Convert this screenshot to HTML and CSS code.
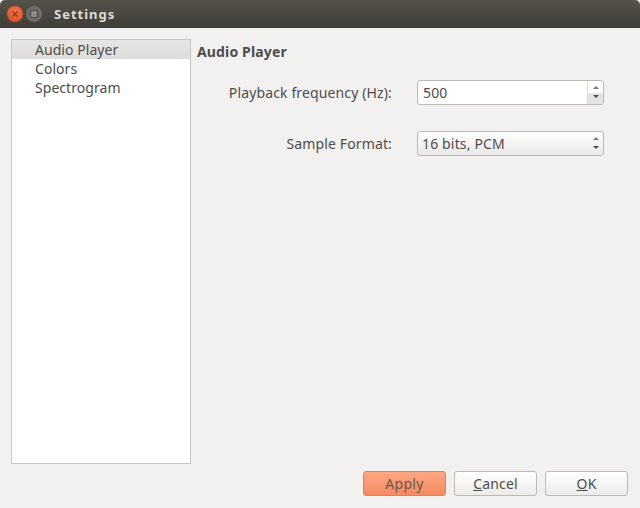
FILE: index.html
```html
<!DOCTYPE html>
<html lang="en">
<head>
    <meta charset="utf-8" />
    <title>Settings</title>
    <link rel="stylesheet" href="styles.css">
</head>
<body>
    <div class="window">
        <div class="titlebar">
            <span class="win-btn close">
                <svg width="8" height="8" viewBox="0 0 8 8"><path d="M1.5 1.5l5 5M6.5 1.5l-5 5" stroke="#8a3414" stroke-width="1.2" fill="none"/></svg>
            </span>
            <span class="win-btn maximize">
                <svg width="10" height="10" viewBox="0 0 10 10"><rect x="1.5" y="1.5" width="7" height="7" rx="1.5" stroke="#4a4944" stroke-width="1.2" fill="#8e8d88"/></svg>
            </span>
            <span class="title">Settings</span>
        </div>
        <div class="content">
            <ul class="pages">
                <li class="selected">Audio Player</li>
                <li>Colors</li>
                <li>Spectrogram</li>
            </ul>
            <div class="panel">
                <h1>Audio Player</h1>
                <div class="form">
                    <label>Playback frequency (Hz):</label>
                    <div class="spinbox">
                        <span class="value">500</span>
                        <span class="spin-arrows">
                            <span class="arrow up"></span>
                            <span class="arrow down"></span>
                        </span>
                    </div>
                    <label>Sample Format:</label>
                    <div class="combo">
                        <span class="value">16 bits, PCM</span>
                        <span class="combo-arrows">
                            <span class="arrow up"></span>
                            <span class="arrow down"></span>
                        </span>
                    </div>
                </div>
            </div>
        </div>
        <div class="buttons">
            <button class="apply">Apply</button>
            <button><u>C</u>ancel</button>
            <button><u>O</u>K</button>
        </div>
    </div>
</body>
</html>
```
FILE: styles.css
```css
html, body {
    margin: 0;
    height: 100%;
    background: #f2f1f0;
}

body {
    font-family: "Noto Sans", sans-serif;
    font-size: 14px;
    color: #4c4c4c;
    overflow: hidden;
}

.window {
    display: flex;
    flex-direction: column;
    height: 508px;
    background: #f2f1f0;
}

.titlebar {
    display: flex;
    align-items: center;
    flex: none;
    height: 28px;
    padding-left: 7px;
    background: linear-gradient(#55524a, #3e3d38);
    border-radius: 5px 5px 0 0;
}

.win-btn {
    display: flex;
    align-items: center;
    justify-content: center;
    width: 16px;
    height: 16px;
    margin-right: 3px;
    border-radius: 50%;
}

.close {
    background: radial-gradient(circle at 50% 35%, #f4794a, #d9441b);
}

.maximize {
    background: #6f6e69;
}

.title {
    margin-left: 9px;
    font-size: 13px;
    font-weight: 700;
    letter-spacing: 1px;
    color: #dfdbd2;
}

.content {
    display: flex;
    flex: 1;
    min-height: 0;
    padding: 11px 11px 0;
}

.pages {
    flex: none;
    box-sizing: border-box;
    width: 180px;
    height: 425px;
    margin: 0;
    padding: 0;
    list-style: none;
    background: #fff;
    border: 1px solid #c9c6c2;
}

.pages li {
    height: 19px;
    padding-left: 23px;
    line-height: 19px;
    letter-spacing: 0.05px;
}

.pages .selected {
    background: linear-gradient(#e8e6e4, #dfdddb);
}

.panel {
    flex: 1;
    padding-left: 6px;
}

.panel h1 {
    margin: 3px 0 0;
    font-size: 14px;
    font-weight: 700;
    line-height: 20px;
    letter-spacing: 0.15px;
}

.form {
    display: grid;
    grid-template-columns: 189px 187px;
    grid-auto-rows: 26px;
    row-gap: 25px;
    align-items: center;
    column-gap: 25px;
    margin-top: 17px;
    margin-left: 6px;
}

.form label {
    text-align: right;
    white-space: nowrap;
    letter-spacing: 0.13px;
}

.spinbox, .combo {
    display: flex;
    align-items: center;
    justify-content: space-between;
    box-sizing: border-box;
    height: 25px;
    border: 1px solid #bdbab5;
    border-radius: 3px;
    letter-spacing: 0.15px;
}

.spinbox {
    background: #fff;
}

.combo {
    background: linear-gradient(#fff, #eae8e6);
}

.spinbox .value {
    padding-left: 5px;
}

.combo .value {
    padding-left: 4px;
}

.spin-arrows, .combo-arrows {
    display: flex;
    flex-direction: column;
    align-items: center;
    justify-content: center;
    gap: 6px;
    width: 15px;
    height: 100%;
}

.spin-arrows {
    border-left: 1px solid #dedcd9;
    background: linear-gradient(#fff 50%, #e6e4e2 50%);
    border-radius: 0 2px 2px 0;
}

.arrow {
    width: 0;
    height: 0;
    border-left: 3px solid transparent;
    border-right: 3px solid transparent;
}

.arrow.up {
    border-bottom: 3px solid #777;
}

.arrow.down {
    border-top: 3px solid #4a4a48;
}

.buttons {
    display: flex;
    justify-content: flex-end;
    gap: 8px;
    flex: none;
    height: 25px;
    padding: 7px 12px 12px 0;
}

.buttons button {
    box-sizing: border-box;
    width: 83px;
    height: 25px;
    padding: 0;
    font: inherit;
    color: #4c4c4c;
    letter-spacing: 0.15px;
    background: linear-gradient(#fff, #ecebe9);
    border: 1px solid #bdbab5;
    border-radius: 3px;
}

.buttons .apply {
    color: #6a564c;
    letter-spacing: 0.3px;
    background: linear-gradient(#fda884, #f58a60);
    border-color: #c98a6e;
}
```
